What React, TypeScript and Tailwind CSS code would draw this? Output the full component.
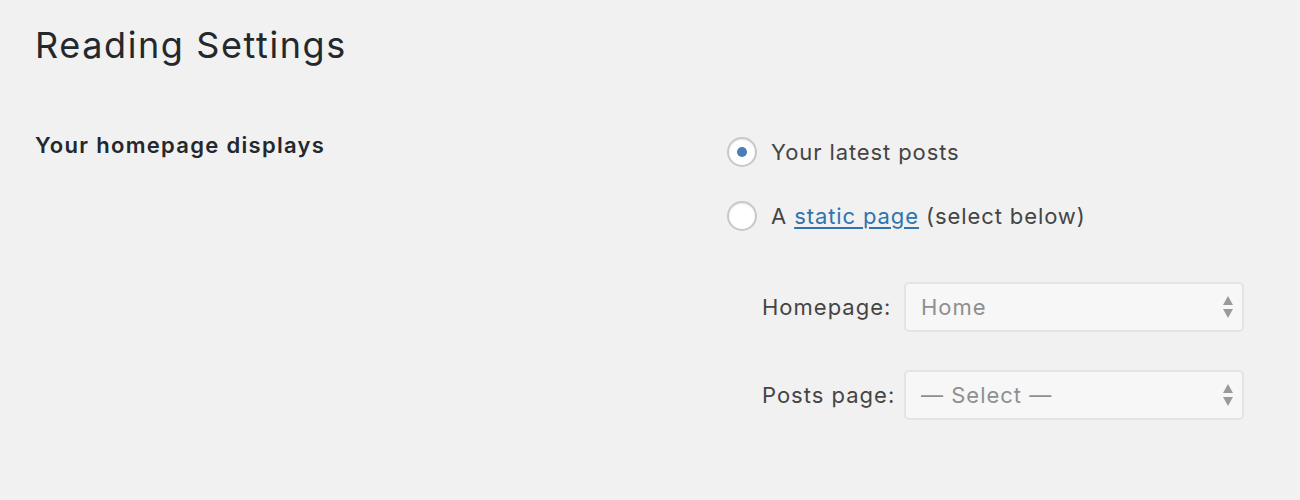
import React from 'react';

const Radio = ({ checked }: { checked?: boolean }) => (
  <span className="flex h-[30px] w-[30px] shrink-0 items-center justify-center rounded-full border-2 border-[#c8c8c8] bg-white shadow-[inset_0_1px_2px_rgba(0,0,0,0.08)]">
    {checked && <span className="h-[10px] w-[10px] rounded-full bg-[#4a7fb6]" />}
  </span>
);

const Arrows = () => (
  <svg width="10" height="22" viewBox="0 0 10 22" className="shrink-0">
    <path d="M5 0 L10 9 L0 9 Z" fill="#9a9a9a" />
    <path d="M0 13 L10 13 L5 22 Z" fill="#9a9a9a" />
  </svg>
);

const SelectRow = ({ label, value }: { label: string; value: string }) => (
  <div className="flex items-center">
    <span className="w-[142px] text-[22px] leading-[30px] tracking-[1px] text-[#444]">{label}</span>
    <div className="flex h-[50px] w-[340px] items-center justify-between rounded-[5px] border-2 border-[#e4e4e4] bg-[#f7f7f7] pl-[15px] pr-[9px]">
      <span className="text-[22px] leading-[30px] tracking-[1px] text-[#8f8f8f]">{value}</span>
      <Arrows />
    </div>
  </div>
);

export default function App() {
  return (
    <div className="min-h-[500px] bg-[#f1f1f1] pl-[35px] pt-[23px] font-['Inter',sans-serif]">
      <h1 className="text-[36px] leading-[44px] tracking-[1.6px] text-[#23282d]">Reading Settings</h1>

      <div className="mt-[63px] flex">
        <div className="w-[692px] text-[22px] font-semibold leading-[30px] tracking-[1.3px] text-[#23282d]">
          Your homepage displays
        </div>

        <div className="pt-[7px]">
          <div className="flex flex-col gap-[34px]">
            <label className="flex items-center gap-[14px] text-[22px] leading-[30px] tracking-[0.9px] text-[#444]">
              <Radio checked />
              <span>Your latest posts</span>
            </label>
            <label className="flex items-center gap-[14px] text-[22px] leading-[30px] tracking-[0.9px] text-[#444]">
              <Radio />
              <span>
                A <a href="#" className="text-[#2f74ae] underline underline-offset-[3px]">static page</a> (select below)
              </span>
            </label>
          </div>

          <div className="ml-[35px] mt-[51px] flex flex-col gap-[38px]">
            <SelectRow label="Homepage:" value="Home" />
            <SelectRow label="Posts page:" value="— Select —" />
          </div>
        </div>
      </div>
    </div>
  );
}
